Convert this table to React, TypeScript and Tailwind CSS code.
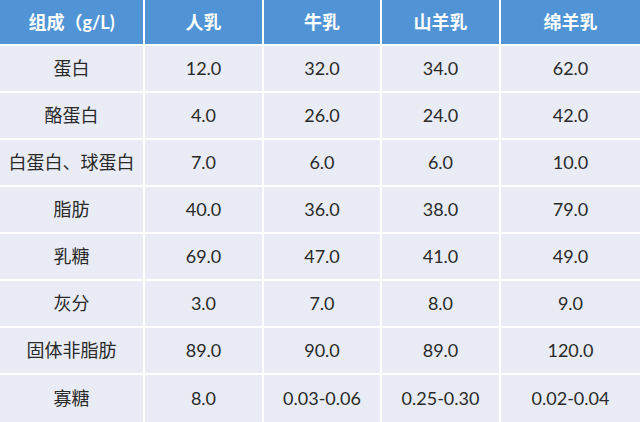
import React from 'react';

const headers = ['组成（g/L)', '人乳', '牛乳', '山羊乳', '绵羊乳'];

const rows: string[][] = [
  ['蛋白', '12.0', '32.0', '34.0', '62.0'],
  ['酪蛋白', '4.0', '26.0', '24.0', '42.0'],
  ['白蛋白、球蛋白', '7.0', '6.0', '6.0', '10.0'],
  ['脂肪', '40.0', '36.0', '38.0', '79.0'],
  ['乳糖', '69.0', '47.0', '41.0', '49.0'],
  ['灰分', '3.0', '7.0', '8.0', '9.0'],
  ['固体非脂肪', '89.0', '90.0', '89.0', '120.0'],
  ['寡糖', '8.0', '0.03-0.06', '0.25-0.30', '0.02-0.04'],
];

export default function App() {
  return (
    <div
      className="w-[640px] h-[422px] bg-white grid grid-cols-[143px_117px_116px_117px_139px] grid-rows-[44px_repeat(7,45px)_47px] gap-[2px] overflow-hidden"
      style={{ fontFamily: 'Lato, "Noto Sans CJK SC", sans-serif' }}
    >
      {headers.map((h) => (
        <div
          key={h}
          className="bg-[#5094d6] text-white font-bold text-[18px] flex items-center justify-center"
        >
          {h}
        </div>
      ))}
      {rows.map((row) =>
        row.map((cell, i) => (
          <div
            key={row[0] + i}
            className="bg-[#e9ecf5] text-[#2a2a2a] text-[18px] flex items-center justify-center"
          >
            {cell}
          </div>
        ))
      )}
    </div>
  );
}
